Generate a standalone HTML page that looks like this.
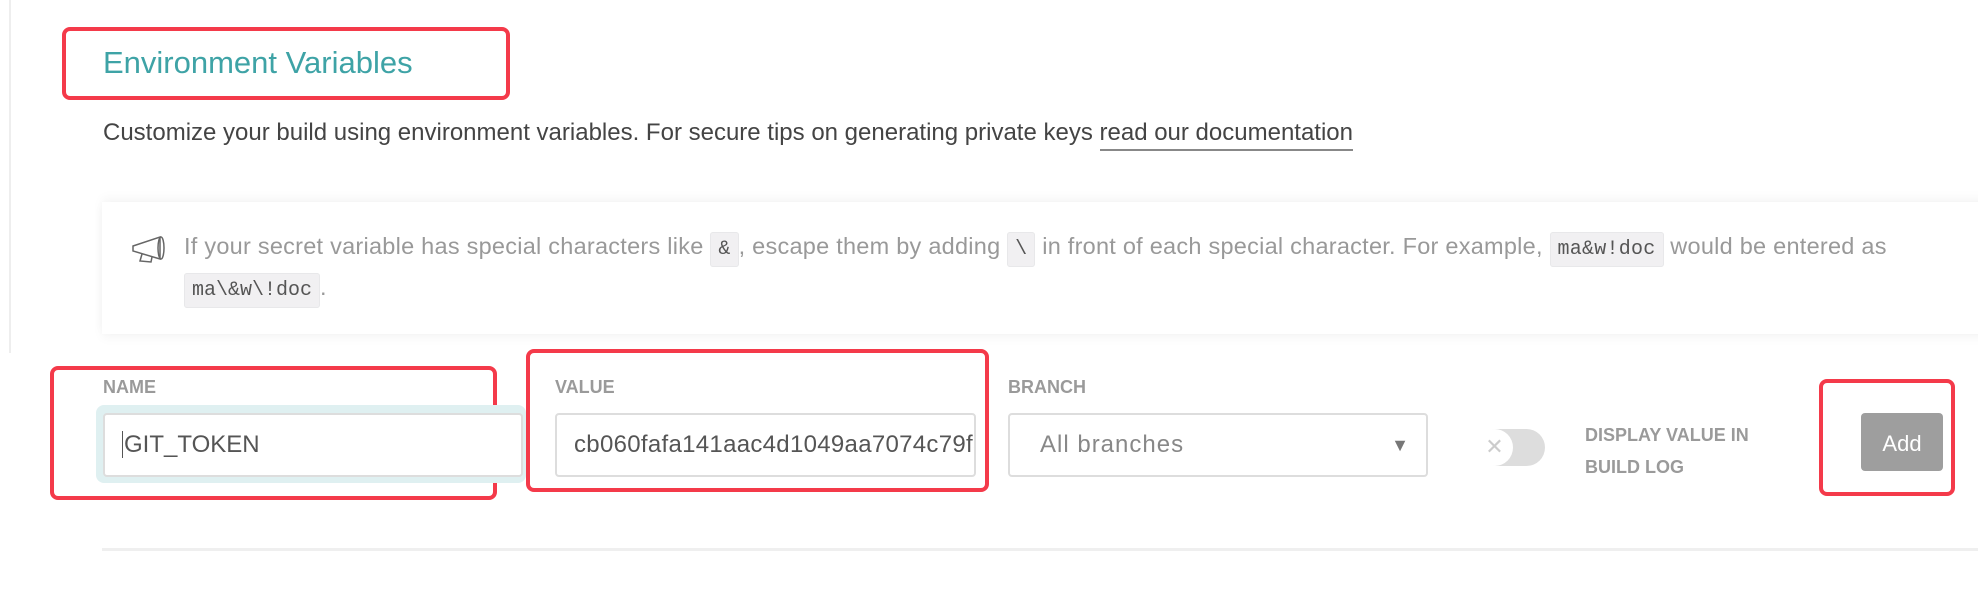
<!DOCTYPE html>
<html><head><meta charset="utf-8"><style>
*{margin:0;padding:0;box-sizing:border-box}
body{width:1978px;height:600px;background:#fff;position:relative;overflow:hidden;font-family:"Liberation Sans",sans-serif}
.a{position:absolute;white-space:nowrap}
.red{position:absolute;border:4px solid #f43a4a;border-radius:8px}
code{font-family:"Liberation Mono",monospace;background:#f1f0f2;border:1px solid #e8e8ea;border-radius:3px;padding:5px 7px;color:#555;font-size:20px}
.lbl{font-size:18px;font-weight:bold;color:#9a9a9a}
.inp{position:absolute;border:2px solid #ddd;border-radius:4px;background:#fff;font-size:24px;color:#555;padding-left:30px;line-height:60px}
</style></head><body>
<div class="a" style="left:9px;top:0;width:2px;height:353px;background:#eee"></div>
<div class="red" style="left:62px;top:27px;width:448px;height:73px"></div>
<div class="a" style="left:103px;top:45px;font-size:31px;color:#3ea3a6">Environment Variables</div>
<div class="a" style="left:103px;top:119px;font-size:24px;color:#444">Customize your build using environment variables. For secure tips on generating private keys <span style="border-bottom:2px solid #888;padding-bottom:3px">read our documentation</span></div>
<div class="a" style="left:102px;top:202px;width:1900px;height:132px;background:#fff;box-shadow:0 -4px 10px rgba(0,0,0,0.04),0 4px 10px rgba(0,0,0,0.04)"></div>
<svg class="a" style="left:131px;top:234px" width="36" height="30" viewBox="0 0 36 30" fill="none" stroke="#666" stroke-width="1.5"><path d="M2 12 L29 3 L29 25 L2 17 Z"/><ellipse cx="30" cy="14" rx="3" ry="11"/><path d="M11 20 L9 27 L20 28 L21 23"/></svg>
<div class="a" style="left:184px;top:233px;font-size:23.5px;color:#999;letter-spacing:0.25px">If your secret variable has special characters like <code>&amp;</code>, escape them by adding <code>\</code> in front of each special character. For example, <code>ma&amp;w!doc</code> would be entered as</div>
<div class="a" style="left:184px;top:274px;font-size:23.5px;color:#999"><code>ma\&amp;w\!doc</code>.</div>

<div class="red" style="left:50px;top:366px;width:447px;height:134px"></div>
<div class="red" style="left:526px;top:349px;width:463px;height:143px"></div>
<div class="red" style="left:1819px;top:379px;width:136px;height:117px"></div>

<div class="a lbl" style="left:103px;top:377px">NAME</div>
<div class="a lbl" style="left:555px;top:377px">VALUE</div>
<div class="a lbl" style="left:1008px;top:377px">BRANCH</div>
<div class="a" style="left:96px;top:405px;width:430px;height:78px;background:#dff0f1;border-radius:8px"></div>
<div class="inp" style="left:103px;top:413px;width:420px;height:64px;padding-left:17px"><span style="border-left:1px solid #555;padding-left:1px">GIT_TOKEN</span></div>
<div class="inp" style="left:555px;top:413px;width:421px;height:64px;padding-left:17px;overflow:hidden;letter-spacing:0.3px">cb060fafa141aac4d1049aa7074c79f3</div>
<div class="inp" style="left:1008px;top:413px;width:420px;height:64px;color:#888;letter-spacing:1px">All branches<span style="position:absolute;right:16px;top:0;font-size:18px;color:#777">▼</span></div>
<div class="a" style="left:1478px;top:429px;width:67px;height:37px;background:#ddd;border-radius:19px"></div>
<div class="a" style="left:1476px;top:429px;width:37px;height:37px;background:#fff;border-radius:50%;color:#ccc;font-size:22px;text-align:center;line-height:36px">✕</div>
<div class="a lbl" style="left:1585px;top:419px;line-height:32px">DISPLAY VALUE IN<br>BUILD LOG</div>
<div class="a" style="left:1861px;top:413px;width:82px;height:58px;background:#9e9e9e;border-radius:4px;color:#fff;font-size:22px;text-align:center;line-height:62px">Add</div>
<div class="a" style="left:102px;top:548px;width:1876px;height:3px;background:#efefef"></div>
</body></html>
